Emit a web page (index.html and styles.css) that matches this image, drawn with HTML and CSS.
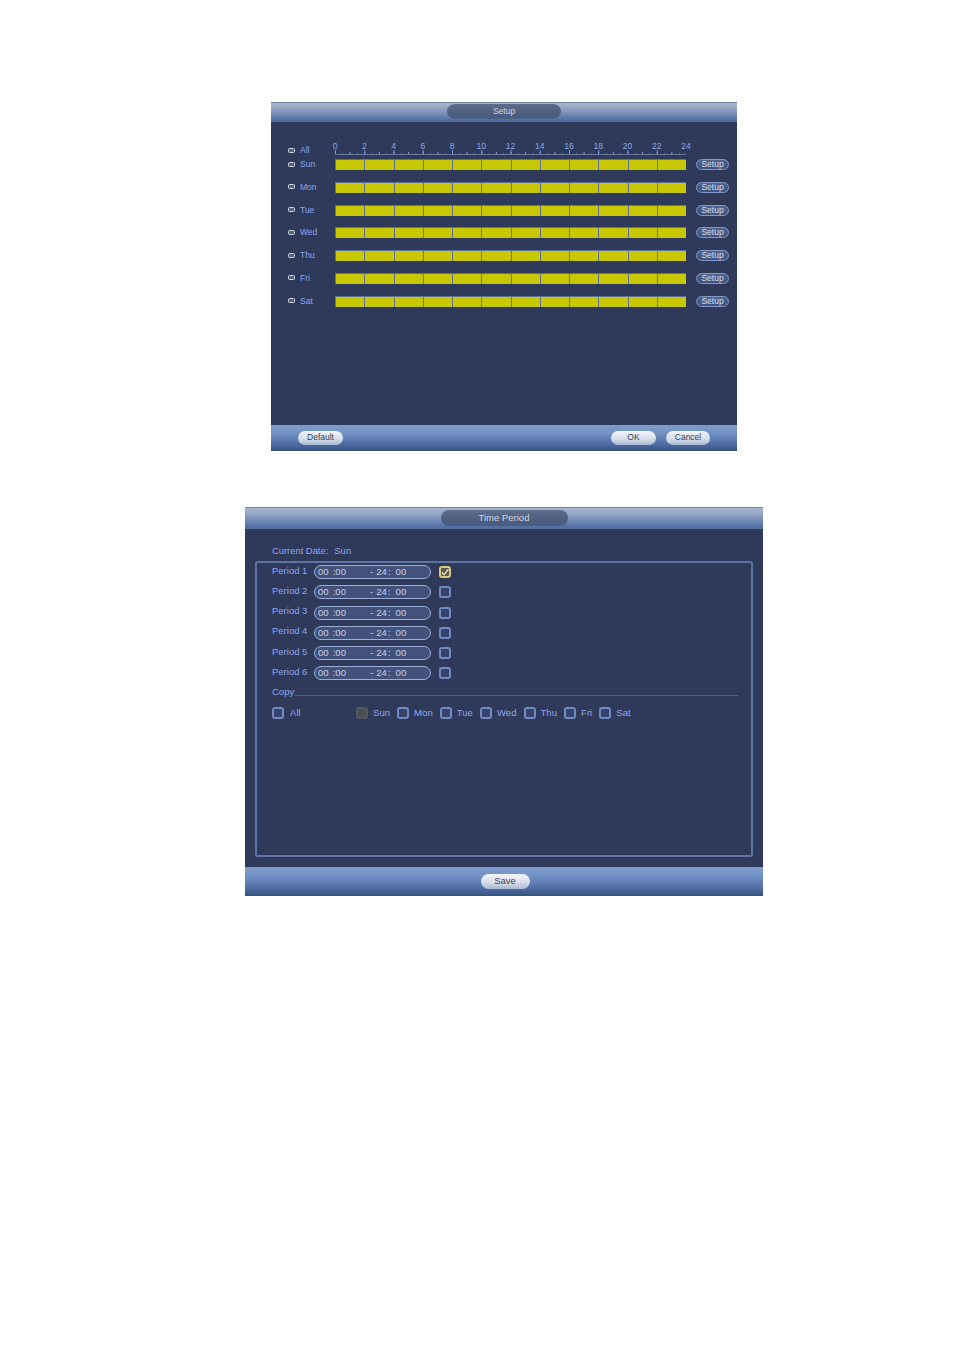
FILE: index.html
```html
<!DOCTYPE html>
<html lang="en">
<head>
<meta charset="utf-8">
<title>Setup and Time Period</title>
<link rel="stylesheet" href="styles.css">
</head>
<body>
<section class="win win-setup">
  <header class="head head-sm"><div class="title title-sm">Setup</div></header>
  <main class="main sched">
    <div class="ruler-row">
      <div class="rowlabel all-label"><span class="pill"></span><span class="dayname">All</span></div>
      <div class="ruler">
        <div class="nums">
          <span>0</span><span>2</span><span>4</span><span>6</span><span>8</span><span>10</span><span>12</span><span>14</span><span>16</span><span>18</span><span>20</span><span>22</span><span>24</span>
        </div>
        <div class="ticks"></div>
      </div>
    </div>
    <div class="day"><div class="rowlabel"><span class="pill"></span><span class="dayname">Sun</span></div><div class="bar"><i></i><i></i><i></i><i></i><i></i><i></i><i></i><i></i><i></i><i></i><i></i><i></i></div><button class="setup">Setup</button></div>
    <div class="day"><div class="rowlabel"><span class="pill"></span><span class="dayname">Mon</span></div><div class="bar"><i></i><i></i><i></i><i></i><i></i><i></i><i></i><i></i><i></i><i></i><i></i><i></i></div><button class="setup">Setup</button></div>
    <div class="day"><div class="rowlabel"><span class="pill"></span><span class="dayname">Tue</span></div><div class="bar"><i></i><i></i><i></i><i></i><i></i><i></i><i></i><i></i><i></i><i></i><i></i><i></i></div><button class="setup">Setup</button></div>
    <div class="day"><div class="rowlabel"><span class="pill"></span><span class="dayname">Wed</span></div><div class="bar"><i></i><i></i><i></i><i></i><i></i><i></i><i></i><i></i><i></i><i></i><i></i><i></i></div><button class="setup">Setup</button></div>
    <div class="day"><div class="rowlabel"><span class="pill"></span><span class="dayname">Thu</span></div><div class="bar"><i></i><i></i><i></i><i></i><i></i><i></i><i></i><i></i><i></i><i></i><i></i><i></i></div><button class="setup">Setup</button></div>
    <div class="day"><div class="rowlabel"><span class="pill"></span><span class="dayname">Fri</span></div><div class="bar"><i></i><i></i><i></i><i></i><i></i><i></i><i></i><i></i><i></i><i></i><i></i><i></i></div><button class="setup">Setup</button></div>
    <div class="day"><div class="rowlabel"><span class="pill"></span><span class="dayname">Sat</span></div><div class="bar"><i></i><i></i><i></i><i></i><i></i><i></i><i></i><i></i><i></i><i></i><i></i><i></i></div><button class="setup">Setup</button></div>
  </main>
  <footer class="foot foot-sm">
    <button class="btn btn-default">Default</button>
    <button class="btn btn-ok">OK</button>
    <button class="btn btn-cancel">Cancel</button>
  </footer>
</section>

<section class="win win-period">
  <header class="head head-lg"><div class="title title-lg">Time Period</div></header>
  <main class="main period-main">
    <div class="date"><span>Current Date:</span><span class="date-val">Sun</span></div>
    <div class="group">
      <div class="period"><span class="plabel">Period 1</span><div class="field"><span>00</span><span class="g4">:00</span><span class="g24">-</span><span class="g3">24</span><span class="g1">:</span><span class="g5">00</span></div><span class="cb cb-on"><svg viewBox="0 0 12 12" class="check"><path d="M2.8 6.2 5 8.6 9.4 3.2" fill="none" stroke="#e8dfb0" stroke-width="1.4"/></svg></span></div>
      <div class="period"><span class="plabel">Period 2</span><div class="field"><span>00</span><span class="g4">:00</span><span class="g24">-</span><span class="g3">24</span><span class="g1">:</span><span class="g5">00</span></div><span class="cb"></span></div>
      <div class="period"><span class="plabel">Period 3</span><div class="field"><span>00</span><span class="g4">:00</span><span class="g24">-</span><span class="g3">24</span><span class="g1">:</span><span class="g5">00</span></div><span class="cb"></span></div>
      <div class="period"><span class="plabel">Period 4</span><div class="field"><span>00</span><span class="g4">:00</span><span class="g24">-</span><span class="g3">24</span><span class="g1">:</span><span class="g5">00</span></div><span class="cb"></span></div>
      <div class="period"><span class="plabel">Period 5</span><div class="field"><span>00</span><span class="g4">:00</span><span class="g24">-</span><span class="g3">24</span><span class="g1">:</span><span class="g5">00</span></div><span class="cb"></span></div>
      <div class="period"><span class="plabel">Period 6</span><div class="field"><span>00</span><span class="g4">:00</span><span class="g24">-</span><span class="g3">24</span><span class="g1">:</span><span class="g5">00</span></div><span class="cb"></span></div>
      <div class="copy"><span>Copy</span><div class="copy-line"></div></div>
      <div class="days">
        <label class="item item-all"><span class="cb"></span><span>All</span></label>
        <label class="item"><span class="cb cb-off"></span><span>Sun</span></label>
        <label class="item"><span class="cb"></span><span>Mon</span></label>
        <label class="item"><span class="cb"></span><span>Tue</span></label>
        <label class="item"><span class="cb"></span><span>Wed</span></label>
        <label class="item"><span class="cb"></span><span>Thu</span></label>
        <label class="item"><span class="cb"></span><span>Fri</span></label>
        <label class="item"><span class="cb"></span><span>Sat</span></label>
      </div>
    </div>
  </main>
  <footer class="foot foot-lg"><button class="btn btn-save">Save</button></footer>
</section>
</body>
</html>
```

FILE: styles.css
```css
* { box-sizing: border-box; }
html, body { margin: 0; padding: 0; background: #fff; }
body {
  width: 954px;
  height: 1350px;
  padding-top: 102px;
  font-family: "Liberation Sans", Arial, sans-serif;
  overflow: hidden;
}
.win {
  display: flex;
  flex-direction: column;
  background: #2f3a5b;
}
.win-setup { width: 466px; height: 349px; margin-left: 271px; }
.win-period { width: 518px; height: 389px; margin-left: 245px; margin-top: 56px; }

.head {
  display: flex;
  justify-content: center;
  flex: none;
  border-top: 1px solid #75829c;
  border-bottom: 1px solid #54709f;
  background: linear-gradient(#a8b6cf, #8ea1c2 35%, #4d6ca2);
}
.head-sm { height: 20px; padding-top: 1px; }
.head-lg { height: 22px; padding-top: 2px; }
.title {
  display: flex;
  align-items: center;
  justify-content: center;
  padding-bottom: 1px;
  background: linear-gradient(#5e6d8b, #4e5e7f 60%, #4a5c80);
  color: #cfd8e8;
  border-radius: 8px;
}
.title-sm { width: 114px; height: 15px; font-size: 8.5px; }
.title-lg { width: 127px; height: 16px; font-size: 9.5px; }

.main { flex: 1; color: #8ea7ec; }
.foot {
  flex: none;
  display: flex;
  align-items: center;
  background: linear-gradient(#7f9dcc, #7392c4 30%, #4d6ba2 75%, #37527f);
}
.foot-sm { height: 26px; padding: 0 27px; }
.foot-lg { height: 29px; justify-content: center; padding-left: 2px; }

.btn {
  display: block;
  padding: 0 0 2px;
  border: 0;
  font: inherit;
  color: #39435a;
  text-align: center;
  background: linear-gradient(#f4f6fa, #d7deea 55%, #a9b8d2);
  border-radius: 8px;
}
.btn-default { width: 45px; height: 14px; font-size: 8.5px; }
.btn-ok { width: 45px; height: 14px; font-size: 8.5px; margin-left: auto; }
.btn-cancel { width: 44px; height: 14px; font-size: 8.5px; margin-left: 10px; }
.btn-save { width: 49px; height: 15px; font-size: 9.5px; }

/* schedule */
.sched { padding: 19px 0 0 17px; font-size: 8.5px; }
.ruler-row { display: flex; height: 14px; }
.rowlabel { display: flex; align-items: center; width: 47px; flex: none; }
.day .rowlabel { padding-bottom: 1px; }
.all-label { height: 10px; align-self: flex-end; }
.pill {
  width: 7px;
  height: 5px;
  flex: none;
  margin-right: 5px;
  border: 1px solid #ccd4e2;
  border-width: 1.6px 1px;
  border-radius: 1.5px;
  background: #59627c;
}
.ruler { width: 351px; height: 14px; }
.nums { display: flex; height: 9px; margin: 0 -14.6px; font-size: 8.5px; line-height: 11px; }
.nums span { width: 29.25px; flex: none; text-align: center; }
.ticks {
  height: 5px;
  border-bottom: 1px solid #66789f;
  background-image:
    linear-gradient(to right, #8499cc 1px, transparent 1px),
    linear-gradient(to right, #8499cc 1px, transparent 1px),
    linear-gradient(to right, #6c7ea6 1px, transparent 1px);
  background-repeat: repeat-x;
  background-size: 29.25px 5px, 14.625px 3px, 7.3125px 1.5px;
  background-position: 0 0, 0 1.5px, 0 3px;
}
.day {
  display: flex;
  height: 22.75px;
  padding: 4px 0 7.75px;
  align-items: center;
}
.bar {
  display: flex;
  width: 351px;
  height: 11px;
  flex: none;
  padding: 1px 0 0;
  background: #5f7199;
}
.bar i {
  display: block;
  flex: 1;
  margin-left: 1px;
  background: #c8c800;
}
.setup {
  display: block;
  width: 33px;
  height: 11px;
  padding: 0;
  margin-left: 10px;
  font: inherit;
  font-size: 8.5px;
  line-height: 9px;
  color: #d5dcec;
  border: 1px solid #8298c8;
  border-radius: 6px;
  background: linear-gradient(#52658f, #3f5280);
}

/* time period */
.period-main { padding: 0 10px 10px; font-size: 9.5px; display: flex; flex-direction: column; }
.date { display: flex; height: 32px; padding: 16px 0 0 17px; line-height: 12px; font-size: 9.4px; }
.date-val { margin-left: 6px; font-size: 9.5px; }
.group {
  flex: 1;
  padding: 2px 13px 0 15px;
  border: 2px solid #5f74a6;
  border-radius: 3px;
}
.period { display: flex; align-items: center; height: 14px; margin-bottom: 6.25px; }
.plabel { width: 42px; flex: none; padding-bottom: 4px; }
.field {
  display: flex;
  align-items: center;
  width: 117px;
  height: 14px;
  padding: 0 0 1px 3px;
  color: #c4cfe6;
  border: 1px solid #9aaed8;
  border-radius: 7px;
  background: #43527a;
  font-size: 9.6px;
}
.g1 { margin-left: 1px; }
.g3 { margin-left: 3px; }
.g4 { margin-left: 4px; }
.g5 { margin-left: 5px; }
.g24 { margin-left: 24px; }
.cb {
  display: block;
  width: 12px;
  height: 12px;
  flex: none;
  border: 2px solid #6f8bc2;
  border-radius: 3px;
  background: #37436a;
}
.period .cb { margin-left: 8px; }
.cb-on { border-color: #dcc878; background: #555a52; }
.cb-off { border-color: #55585e; background: #4b4e57; }
.check { display: block; width: 12px; height: 12px; margin: -2px; }
.copy { display: flex; height: 12px; margin-top: -1px; line-height: 12px; }
.copy-line { flex: 1; height: 10px; margin-left: 1px; border-bottom: 1px solid #4f5f85; }
.days { display: flex; gap: 7px; margin-top: 9px; align-items: center; font-size: 9.6px; }
.item { display: flex; align-items: center; gap: 5px; height: 12px; }
.item-all { width: 77px; gap: 6px; }
```
